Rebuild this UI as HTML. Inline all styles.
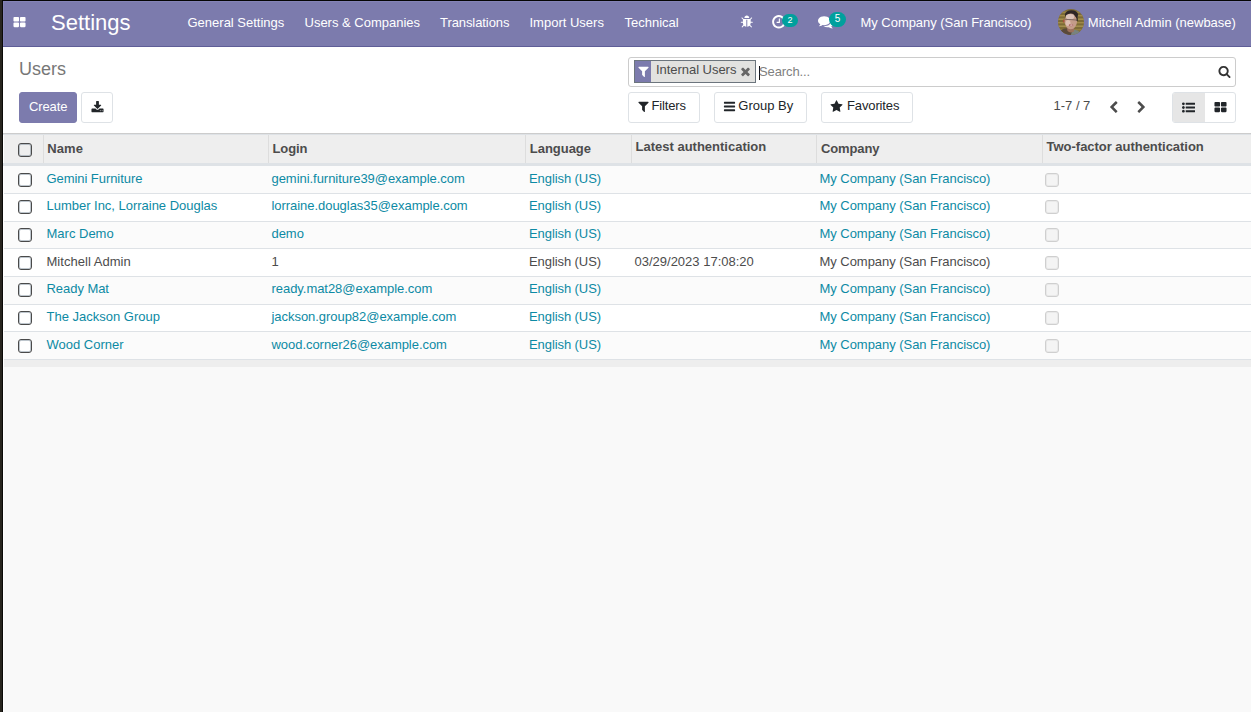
<!DOCTYPE html>
<html lang="en">
<head>
<meta charset="utf-8">
<title>Odoo - Users</title>
<style>
*{box-sizing:border-box;}
html,body{margin:0;padding:0;}
body{width:1251px;height:712px;overflow:hidden;background:#f9f9f9;font-family:"Liberation Sans",Arial,sans-serif;font-size:13px;color:#4c4c4c;position:relative;}
.edge-l{position:absolute;left:0;top:0;width:2px;height:712px;background:#28251f;border-right:1px solid #0b0a08;box-sizing:content-box;z-index:10;}
.hl{position:absolute;background:#8483b7;z-index:9;}
.wc{position:absolute;left:3px;width:1px;background:#fff;z-index:8;}
.edge-t{position:absolute;left:2px;top:0;width:1249px;height:1px;background:#050505;z-index:10;}
.nav{position:absolute;left:0;top:1px;width:1251px;height:46px;background:#7c7bad;border-bottom:1px solid #5f5e97;}
.nav .t{position:absolute;white-space:nowrap;color:#fff;line-height:15px;font-size:13px;}
.cp{position:absolute;left:0;top:47px;width:1251px;height:87px;background:#fff;border-bottom:1px solid #cccccc;}
.abs{position:absolute;white-space:nowrap;line-height:15px;}
.ic{position:absolute;display:block;overflow:visible;}
.btn{position:absolute;border:1px solid #dee2e6;border-radius:3px;background:#fff;color:#212529;}
.badge{position:absolute;background:#00a09d;color:#fff;border-radius:8px;font-size:10px;line-height:15px;height:15px;text-align:center;}
.thead{position:absolute;left:0;top:134px;width:1251px;height:29px;background:#eeeeee;}
.thb{position:absolute;left:0;top:163px;width:1251px;height:3px;background:#dee2e6;}
.th{position:absolute;white-space:nowrap;font-weight:bold;color:#4c4c4c;line-height:15px;}
.vs{position:absolute;top:135px;width:1px;height:28px;background:#dddddd;}
.ttl{position:absolute;left:0;top:134px;width:1251px;height:1px;background:#dee2e6;z-index:9;}
.row{position:absolute;left:0;width:1251px;background:#fff;border-bottom:1px solid #dee2e6;}
.row.odd{background:#fbfbfb;}
.row span{position:absolute;white-space:nowrap;line-height:15px;color:#0d8aa4;}
.row.me span{color:#4c4c4c;}
.cb{position:absolute;width:14px;height:14px;border:1px solid #4a4a4a;border-radius:3px;background:#fff;box-shadow:inset 0 0 0 1px rgba(100,118,135,.42);}
.cb.dis{border-color:#cfcfcf;background:#f4f4f4;box-shadow:inset 0 0 0 1px rgba(200,200,200,.25);}
.tfoot{position:absolute;left:0;width:1251px;height:7px;background:#eeeeee;}
</style>
</head>
<body>
<div class="edge-l"></div><div class="edge-t"></div><div class="hl" style="left:3px;top:1px;width:1px;height:45px;"></div><div class="hl" style="left:3px;top:1px;width:1248px;height:1px;"></div><div class="wc" style="top:134px;height:29px;"></div><div class="wc" style="top:166px;height:546px;"></div>
<div class="nav">
<svg class="ic" style="left:12.5px;top:15px;width:13px;height:13px;" viewBox="0 0 1792 1792"><path fill="#fff" d="M832 1024v384q0 52-38 90t-90 38h-512q-52 0-90-38t-38-90v-384q0-52 38-90t90-38h512q52 0 90 38t38 90zm0-768v384q0 52-38 90t-90 38h-512q-52 0-90-38t-38-90v-384q0-52 38-90t90-38h512q52 0 90 38t38 90zm896 768v384q0 52-38 90t-90 38h-512q-52 0-90-38t-38-90v-384q0-52 38-90t90-38h512q52 0 90 38t38 90zm0-768v384q0 52-38 90t-90 38h-512q-52 0-90-38t-38-90v-384q0-52 38-90t90-38h512q52 0 90 38t38 90z"/></svg>
<span class="t" style="left:51px;top:9px;font-size:22px;line-height:26px;">Settings</span>
<span class="t" style="left:187.5px;top:14px;letter-spacing:0px;">General Settings</span>
<span class="t" style="left:304.5px;top:14px;letter-spacing:0px;">Users &amp; Companies</span>
<span class="t" style="left:440px;top:14px;letter-spacing:-0.08px;">Translations</span>
<span class="t" style="left:529.5px;top:14px;letter-spacing:0px;">Import Users</span>
<span class="t" style="left:624.5px;top:14px;letter-spacing:0px;">Technical</span>
<span class="t" style="left:860.5px;top:14px;letter-spacing:-0.035px;">My Company (San Francisco)</span>
<span class="t" style="left:1087.8px;top:14px;letter-spacing:0px;">Mitchell Admin (newbase)</span>
<svg class="ic" style="left:739.5px;top:14px;width:13.6px;height:13.6px;" viewBox="0 0 1792 1792"><path fill="#fff" d="M1696 960q0 26-19 45t-45 19h-224q0 171-67 290l208 209q19 19 19 45t-19 45q-18 19-45 19t-45-19l-198-197q-5 5-15 13t-42 28.500-65 36.500-82 29-97 13v-896h-128v896q-51 0-101.500-13.500t-87-33-66-39-43.500-32.500l-15-14-183 207q-20 21-48 21-24 0-43-16-19-18-20.500-44.500t15.500-46.500l202-227q-58-114-58-274h-224q-26 0-45-19t-19-45 19-45 45-19h224v-294l-173-173q-19-19-19-45t19-45 45-19 45 19l173 173h844l173-173q19-19 45-19t45 19 19 45-19 45l-173 173v294h224q26 0 45 19t19 45zm-480-576h-640q0-133 93.500-226.500t226.500-93.500 226.500 93.500 93.500 226.500z"/></svg>
<svg class="ic" style="left:771.3px;top:13px;width:15.6px;height:15.6px;" viewBox="0 0 1792 1792"><path fill="#fff" d="M1024 544v448q0 14-9 23t-23 9h-320q-14 0-23-9t-9-23v-64q0-14 9-23t23-9h224v-352q0-14 9-23t23-9h64q14 0 23 9t9 23zm416 352q0-148-73-273t-198-198-273-73-273 73-198 198-73 273 73 273 198 198 273 73 273-73 198-198 73-273zm224 0q0 209-103 385.500t-279.500 279.500-385.500 103-385.500-103-279.500-279.500-103-385.500 103-385.500 279.500-279.500 385.500-103 385.500 103 279.500 279.500 103 385.500z"/></svg>
<span class="badge" style="left:782px;top:13px;width:16px;height:13px;line-height:13px;font-size:9.1px;border-radius:7px;">2</span>
<svg class="ic" style="left:817.9px;top:13px;width:15.6px;height:15.6px;" viewBox="0 0 1792 1792"><path fill="#fff" d="M1408 768q0 139-94 257t-256.500 186.500-353.500 68.500q-86 0-176-16-124 88-278 128-36 9-86 16h-3q-11 0-20.500-8t-11.500-21q-1-3-1-6.500t.5-6.500 2-6l2.500-5t3.500-5.500 4-5 4.500-5 4-4.500q5-6 23-25t26-29.500 22.500-29 25-38.500 20.500-44q-124-72-195-177t-71-224q0-139 94-257t256.500-186.500 353.500-68.500 353.500 68.500 256.500 186.500 94 257zm384 256q0 120-71 224.500t-195 176.500q10 24 20.500 44t25 38.500 22.500 29 26 29.500 23 25q1 1 4 4.500t4.500 5 4 5 3.500 5.500l2.500 5t2 6 .5 6.500-1 6.500q-3 14-13 22t-22 7q-50-7-86-16-154-40-278-128-90 16-176 16-271 0-472-132 58 4 88 4 161 0 309-45t264-129q125-92 192-212t67-254q0-77-23-152 129 71 204 178t75 230z"/></svg>
<span class="badge" style="left:829px;top:11px;width:17px;height:15px;line-height:14px;font-size:10px;">5</span>
<svg class="ic" style="left:1058px;top:8px;width:26px;height:26px;" viewBox="0 0 26 26"><defs><clipPath id="av"><circle cx="13" cy="13" r="13"/></clipPath><filter id="bl" x="-20%" y="-20%" width="140%" height="140%"><feGaussianBlur stdDeviation="0.6"/></filter></defs><g clip-path="url(#av)"><rect width="26" height="26" fill="#7d6b36"/><g filter="url(#bl)"><rect x="-1" y="2.500" width="28" height="1.400" fill="#9c8848"/><rect x="-1" y="6" width="28" height="1.400" fill="#a08a48"/><rect x="-1" y="9.500" width="28" height="1.400" fill="#a8934f"/><rect x="-1" y="13" width="28" height="1.400" fill="#a08a48"/><rect x="-1" y="16.500" width="28" height="1.400" fill="#a8934f"/><rect x="-1" y="20" width="28" height="1.400" fill="#947f40"/><path d="M1 27 L3 21 Q7 18.500 10 19.500 L15 21 L13 27 Z" fill="#5a4a3a"/><path d="M12.500 27 L14.500 21 Q19 20 22.500 23.500 L24 27 Z" fill="#78827f"/><path d="M8.500 17 L16 17 L16 22.500 Q12 24.500 9.500 22 Z" fill="#9c705c"/><ellipse cx="13.500" cy="5.800" rx="6.600" ry="4.600" fill="#2e2826"/><ellipse cx="5.900" cy="12" rx="1" ry="1.700" fill="#a9503c"/><ellipse cx="12.800" cy="12.400" rx="6.200" ry="7.800" fill="#c49c89"/><ellipse cx="12" cy="7.800" rx="4.200" ry="2.800" fill="#dcc4ba"/><ellipse cx="10" cy="14" rx="2.500" ry="3" fill="#ddbfb1"/><path d="M6.600 9.700 L19 10.700 L18.900 11.600 L6.500 10.600 Z" fill="#5a4c48" opacity=".85"/><ellipse cx="13" cy="16.200" rx="2.300" ry="1.100" fill="#b06a66"/><ellipse cx="13.300" cy="15.900" rx="1.300" ry=".5" fill="#ead9d4"/><path d="M17.500 4.500 Q20.300 7 19.700 12 L18.700 12 Q18.800 8 16.500 6 Z" fill="#2e2826"/></g></g></svg>
</div>
<div class="cp"><div style="position:absolute;left:0;top:-1px;width:1251px;height:0;">
<span class="abs" style="left:19px;top:12px;font-size:18px;line-height:22px;color:#777;">Users</span>
<div class="btn" style="left:19px;top:46px;width:58px;height:31px;background:#7c7bad;border-color:#7c7bad;"><span class="abs" style="left:9px;top:6px;color:#fff;letter-spacing:-0.13px;">Create</span></div>
<div class="btn" style="left:81px;top:46px;width:32px;height:31px;"><svg class="ic" style="left:8.7px;top:8px;width:13px;height:13px;" viewBox="0 0 1792 1792"><path fill="#212529" d="M1344 1344q0-26-19-45t-45-19-45 19-19 45 19 45 45 19 45-19 19-45zm256 0q0-26-19-45t-45-19-45 19-19 45 19 45 45 19 45-19 19-45zm128-224v320q0 40-28 68t-68 28h-1472q-40 0-68-28t-28-68v-320q0-40 28-68t68-28h465l135 136q58 56 136 56t136-56l136-136h464q40 0 68 28t28 68zm-325-569q17 41-14 70l-448 448q-18 19-45 19t-45-19l-448-448q-31-29-14-70 17-39 59-39h256v-448q0-26 19-45t45-19h256q26 0 45 19t19 45v448h256q42 0 59 39z"/></svg></div>
<div style="position:absolute;left:628px;top:11px;width:608px;height:30px;border:1px solid #cccccc;border-radius:3px;background:#fff;"></div>
<div style="position:absolute;left:634px;top:14px;width:122px;height:23px;border:1px solid #6c757d;background:#e2e2e0;"></div>
<div style="position:absolute;left:635px;top:15px;width:16px;height:21px;background:#7c7bad;"></div>
<svg class="ic" style="left:636.5px;top:18.6px;width:13px;height:13px;" viewBox="0 0 1792 1792"><path fill="#fff" d="M1595 295q17 41-14 70l-493 493v742q0 42-39 59-13 5-25 5-27 0-45-19l-256-256q-19-19-19-45v-486l-493-493q-31-29-14-70 17-39 59-39h1280q42 0 59 39z"/></svg>
<span class="abs" style="left:656px;top:16px;color:#4c4c4c;letter-spacing:-0.04px;">Internal Users</span>
<svg class="ic" style="left:738.7px;top:19.3px;width:13px;height:13px;" viewBox="0 0 1792 1792"><path fill="#666" d="M1490 1322q0 40-28 68l-136 136q-28 28-68 28t-68-28l-294-294-294 294q-28 28-68 28t-68-28l-136-136q-28-28-28-68t28-68l294-294-294-294q-28-28-28-68t28-68l136-136q28-28 68-28t68 28l294 294 294-294q28-28 68-28t68 28l136 136q28 28 28 68t-28 68l-294 294 294 294q28 28 28 68z"/></svg>
<div style="position:absolute;left:759px;top:20px;width:1px;height:14px;background:#111;"></div>
<span class="abs" style="left:759px;top:18px;color:#7f7f7f;letter-spacing:-0.1px;">Search...</span>
<svg class="ic" style="left:1217.7px;top:19px;width:13px;height:13px;" viewBox="0 0 1792 1792"><path fill="#333" d="M1216 832q0-185-131.5-316.5t-316.5-131.5-316.5 131.5-131.5 316.5 131.5 316.5 316.5 131.5 316.5-131.5 131.5-316.5zm512 832q0 52-38 90t-90 38q-54 0-90-38l-343-342q-179 124-399 124-143 0-273.500-55.500t-225-150-150-225-55.500-273.500 55.500-273.500 150-225 225-150 273.500-55.500 273.500 55.500 225 150 150 225 55.500 273.500q0 220-124 399l343 343q37 37 37 90z"/></svg>
<div class="btn" style="left:628px;top:46px;width:72px;height:31px;"></div>
<svg class="ic" style="left:637.3px;top:53.5px;width:13px;height:13px;" viewBox="0 0 1792 1792"><path fill="#212529" d="M1595 295q17 41-14 70l-493 493v742q0 42-39 59-13 5-25 5-27 0-45-19l-256-256q-19-19-19-45v-486l-493-493q-31-29-14-70 17-39 59-39h1280q42 0 59 39z"/></svg>
<span class="abs" style="left:651.5px;top:52px;color:#212529;font-size:13px;letter-spacing:-0.14px;">Filters</span>
<div class="btn" style="left:714px;top:46px;width:93px;height:31px;"></div>
<svg class="ic" style="left:723.3px;top:53.5px;width:13px;height:13px;" viewBox="0 0 1792 1792"><path fill="#212529" d="M1664 1344v128q0 26-19 45t-45 19h-1408q-26 0-45-19t-19-45v-128q0-26 19-45t45-19h1408q26 0 45 19t19 45zm0-512v128q0 26-19 45t-45 19h-1408q-26 0-45-19t-19-45v-128q0-26 19-45t45-19h1408q26 0 45 19t19 45zm0-512v128q0 26-19 45t-45 19h-1408q-26 0-45-19t-19-45v-128q0-26 19-45t45-19h1408q26 0 45 19t19 45z"/></svg>
<span class="abs" style="left:738.3px;top:52px;color:#212529;font-size:13px;letter-spacing:0px;">Group By</span>
<div class="btn" style="left:821px;top:46px;width:92px;height:31px;"></div>
<svg class="ic" style="left:830.3px;top:53.5px;width:13px;height:13px;" viewBox="0 0 1792 1792"><path fill="#212529" d="M1728 647q0 22-26 48l-363 354 86 500q1 7 1 20 0 21-10.500 35.500t-30.500 14.500q-19 0-40-12l-449-236-449 236q-22 12-40 12-21 0-31.500-14.500t-10.500-35.500q0-6 2-20l86-500-364-354q-25-27-25-48 0-37 56-46l502-73 225-455q19-41 49-41t49 41l225 455 502 73q56 9 56 46z"/></svg>
<span class="abs" style="left:847px;top:52px;color:#212529;font-size:13px;letter-spacing:-0.13px;">Favorites</span>
<span class="abs" style="left:1053.5px;top:52px;color:#4c4c4c;">1-7 / 7</span>
<svg class="ic" style="left:1106.5px;top:55px;width:13px;height:13px;" viewBox="0 0 1792 1792"><path fill="#4c4c4c" d="M1427 301l-531 531 531 531q19 19 19 45t-19 45l-166 166q-19 19-45 19t-45-19l-742-742q-19-19-19-45t19-45l742-742q19-19 45-19t45 19l166 166q19 19 19 45t-19 45z"/></svg>
<svg class="ic" style="left:1135px;top:55px;width:13px;height:13px;" viewBox="0 0 1792 1792"><path fill="#4c4c4c" d="M1363 877l-742 742q-19 19-45 19t-45-19l-166-166q-19-19-19-45t19-45l531-531-531-531q-19-19-19-45t19-45l166-166q19-19 45-19t45 19l742 742q19 19 19 45t-19 45z"/></svg>
<div class="btn" style="left:1172px;top:46px;width:64px;height:31px;"></div>
<div style="position:absolute;left:1173px;top:47px;width:31.5px;height:29px;background:#e6e6e6;border-radius:2px 0 0 2px;"></div>
<svg class="ic" style="left:1182px;top:55px;width:13px;height:13px;" viewBox="0 0 1792 1792"><path fill="#212529" d="M384 1408q0 80-56 136t-136 56-136-56-56-136 56-136 136-56 136 56 56 136zm0-512q0 80-56 136t-136 56-136-56-56-136 56-136 136-56 136 56 56 136zm1408 416v192q0 13-9.500 22.500t-22.500 9.500h-1216q-13 0-22.500-9.500t-9.500-22.500v-192q0-13 9.500-22.500t22.500-9.500h1216q13 0 22.500 9.500t9.500 22.500zm-1408-928q0 80-56 136t-136 56-136-56-56-136 56-136 136-56 136 56 56 136zm1408 416v192q0 13-9.500 22.500t-22.500 9.500h-1216q-13 0-22.500-9.500t-9.500-22.500v-192q0-13 9.500-22.500t22.500-9.500h1216q13 0 22.500 9.500t9.500 22.500zm0-512v192q0 13-9.500 22.500t-22.500 9.500h-1216q-13 0-22.500-9.500t-9.500-22.500v-192q0-13 9.500-22.500t22.500-9.500h1216q13 0 22.500 9.500t9.500 22.500z"/></svg>
<svg class="ic" style="left:1213.5px;top:55px;width:13px;height:13px;" viewBox="0 0 1792 1792"><path fill="#212529" d="M832 1024v384q0 52-38 90t-90 38h-512q-52 0-90-38t-38-90v-384q0-52 38-90t90-38h512q52 0 90 38t38 90zm0-768v384q0 52-38 90t-90 38h-512q-52 0-90-38t-38-90v-384q0-52 38-90t90-38h512q52 0 90 38t38 90zm896 768v384q0 52-38 90t-90 38h-512q-52 0-90-38t-38-90v-384q0-52 38-90t90-38h512q52 0 90 38t38 90zm0-768v384q0 52-38 90t-90 38h-512q-52 0-90-38t-38-90v-384q0-52 38-90t90-38h512q52 0 90 38t38 90z"/></svg>
</div></div>
<div class="thead"></div><div class="ttl"></div><div class="thb"></div>
<div class="vs" style="left:43px;"></div>
<div class="vs" style="left:268px;"></div>
<div class="vs" style="left:525px;"></div>
<div class="vs" style="left:631px;"></div>
<div class="vs" style="left:816px;"></div>
<div class="vs" style="left:1042px;"></div>
<div class="cb" style="left:18px;top:143px;background:#eee;"></div>
<span class="th" style="left:47.3px;top:141px;letter-spacing:0.1px;">Name</span>
<span class="th" style="left:272.5px;top:141px;letter-spacing:-0.1px;">Login</span>
<span class="th" style="left:529.8px;top:141px;letter-spacing:-0.03px;">Language</span>
<span class="th" style="left:635.5px;top:139px;letter-spacing:0px;">Latest authentication</span>
<span class="th" style="left:821px;top:141px;letter-spacing:-0.13px;">Company</span>
<span class="th" style="left:1046.6px;top:139px;letter-spacing:-0.03px;">Two-factor authentication</span>
<div class="row odd" style="top:166px;height:28px;"><div class="cb" style="left:18px;top:7px;"></div><span style="left:46.5px;top:5px;letter-spacing:-0.06px;">Gemini Furniture</span><span style="left:271.5px;top:5px;letter-spacing:-0.045px;">gemini.furniture39@example.com</span><span style="left:529px;top:5px;letter-spacing:-0.08px;">English (US)</span><span style="left:634.5px;top:5px;"></span><span style="left:819.5px;top:5px;letter-spacing:-0.04px;">My Company (San Francisco)</span><div class="cb dis" style="left:1045px;top:7px;"></div></div>
<div class="row" style="top:194px;height:28px;"><div class="cb" style="left:18px;top:6px;"></div><span style="left:46.5px;top:4px;letter-spacing:-0.02px;">Lumber Inc, Lorraine Douglas</span><span style="left:271.5px;top:4px;letter-spacing:-0.045px;">lorraine.douglas35@example.com</span><span style="left:529px;top:4px;letter-spacing:-0.08px;">English (US)</span><span style="left:634.5px;top:4px;"></span><span style="left:819.5px;top:4px;letter-spacing:-0.04px;">My Company (San Francisco)</span><div class="cb dis" style="left:1045px;top:6px;"></div></div>
<div class="row odd" style="top:222px;height:27px;"><div class="cb" style="left:18px;top:6px;"></div><span style="left:46.5px;top:4px;letter-spacing:0px;">Marc Demo</span><span style="left:271.5px;top:4px;letter-spacing:-0.045px;">demo</span><span style="left:529px;top:4px;letter-spacing:-0.08px;">English (US)</span><span style="left:634.5px;top:4px;"></span><span style="left:819.5px;top:4px;letter-spacing:-0.04px;">My Company (San Francisco)</span><div class="cb dis" style="left:1045px;top:6px;"></div></div>
<div class="row me" style="top:249px;height:28px;"><div class="cb" style="left:18px;top:7px;"></div><span style="left:46.5px;top:5px;letter-spacing:0.03px;">Mitchell Admin</span><span style="left:271.5px;top:5px;letter-spacing:-0.045px;">1</span><span style="left:529px;top:5px;letter-spacing:-0.08px;">English (US)</span><span style="left:634.5px;top:5px;">03/29/2023 17:08:20</span><span style="left:819.5px;top:5px;letter-spacing:-0.04px;">My Company (San Francisco)</span><div class="cb dis" style="left:1045px;top:7px;"></div></div>
<div class="row odd" style="top:277px;height:28px;"><div class="cb" style="left:18px;top:6px;"></div><span style="left:46.5px;top:4px;letter-spacing:-0.05px;">Ready Mat</span><span style="left:271.5px;top:4px;letter-spacing:-0.045px;">ready.mat28@example.com</span><span style="left:529px;top:4px;letter-spacing:-0.08px;">English (US)</span><span style="left:634.5px;top:4px;"></span><span style="left:819.5px;top:4px;letter-spacing:-0.04px;">My Company (San Francisco)</span><div class="cb dis" style="left:1045px;top:6px;"></div></div>
<div class="row" style="top:305px;height:27px;"><div class="cb" style="left:18px;top:6px;"></div><span style="left:46.5px;top:4px;letter-spacing:0px;">The Jackson Group</span><span style="left:271.5px;top:4px;letter-spacing:-0.045px;">jackson.group82@example.com</span><span style="left:529px;top:4px;letter-spacing:-0.08px;">English (US)</span><span style="left:634.5px;top:4px;"></span><span style="left:819.5px;top:4px;letter-spacing:-0.04px;">My Company (San Francisco)</span><div class="cb dis" style="left:1045px;top:6px;"></div></div>
<div class="row odd" style="top:332px;height:28px;"><div class="cb" style="left:18px;top:7px;"></div><span style="left:46.5px;top:5px;letter-spacing:0px;">Wood Corner</span><span style="left:271.5px;top:5px;letter-spacing:-0.045px;">wood.corner26@example.com</span><span style="left:529px;top:5px;letter-spacing:-0.08px;">English (US)</span><span style="left:634.5px;top:5px;"></span><span style="left:819.5px;top:5px;letter-spacing:-0.04px;">My Company (San Francisco)</span><div class="cb dis" style="left:1045px;top:7px;"></div></div>
<div class="tfoot" style="top:360px;"></div>
</body>
</html>
